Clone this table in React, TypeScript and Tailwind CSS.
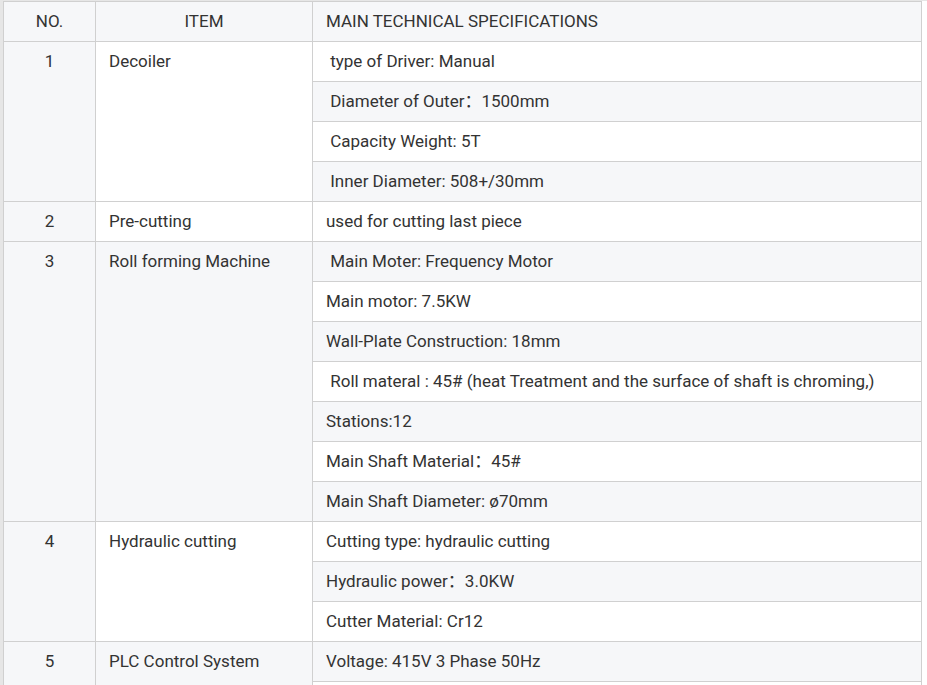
import React from 'react';

type Group = {
  no: string;
  item: string;
  specs: string[];
};

const NB = '\u00a0';

const groups: Group[] = [
  {
    no: '1',
    item: 'Decoiler',
    specs: [
      NB + 'type of Driver: Manual',
      NB + 'Diameter of Outer：1500mm',
      NB + 'Capacity Weight: 5T',
      NB + 'Inner Diameter: 508+/30mm',
    ],
  },
  { no: '2', item: 'Pre-cutting', specs: ['used for cutting last piece'] },
  {
    no: '3',
    item: 'Roll forming Machine',
    specs: [
      NB + 'Main Moter: Frequency Motor',
      'Main motor: 7.5KW',
      'Wall-Plate Construction: 18mm',
      NB + 'Roll materal : 45# (heat Treatment and the surface of shaft is chroming,)',
      'Stations:12',
      'Main Shaft Material：45#',
      'Main Shaft Diameter: ø70mm',
    ],
  },
  {
    no: '4',
    item: 'Hydraulic cutting',
    specs: ['Cutting type: hydraulic cutting', 'Hydraulic power：3.0KW', 'Cutter Material: Cr12'],
  },
  {
    no: '5',
    item: 'PLC Control System',
    specs: ['Voltage: 415V 3 Phase 50Hz', NB],
  },
];

const cell = 'border border-[#d0d0d0] px-[13px] py-[9px] leading-[21px] align-top';

export default function App() {
  let rowIndex = 1; // header is row 1

  const rows: React.ReactNode[] = [];
  groups.forEach((g) => {
    g.specs.forEach((spec, i) => {
      rowIndex += 1;
      const shaded = rowIndex % 2 === 1;
      const bg = shaded ? 'bg-[#f6f7f9]' : 'bg-white';
      rows.push(
        <tr key={`${g.no}-${i}`} className={bg}>
          {i === 0 && (
            <>
              <td rowSpan={g.specs.length} className={`${cell} text-center bg-[#f6f7f9]`}>
                {g.no}
              </td>
              <td rowSpan={g.specs.length} className={cell}>
                {g.item}
              </td>
            </>
          )}
          <td className={cell}>{spec}</td>
        </tr>
      );
    });
  });

  return (
    <div
      className="min-h-screen bg-white border-t border-t-[#e6e6e6] border-l-[3px] border-l-[#e6e6e6] text-[17px] text-[#333333]"
      style={{ fontFamily: 'Roboto, "Noto Sans CJK SC", sans-serif' }}
    >
      <table className="table-fixed border-collapse w-[919px]">
        <colgroup>
          <col className="w-[92px]" />
          <col className="w-[217px]" />
          <col />
        </colgroup>
        <thead>
          <tr className="bg-[#f6f7f9]">
            <th className={`${cell} font-normal text-center`}>NO.</th>
            <th className={`${cell} font-normal text-center`}>ITEM</th>
            <th className={`${cell} font-normal text-left`}>MAIN TECHNICAL SPECIFICATIONS</th>
          </tr>
        </thead>
        <tbody>{rows}</tbody>
      </table>
    </div>
  );
}
